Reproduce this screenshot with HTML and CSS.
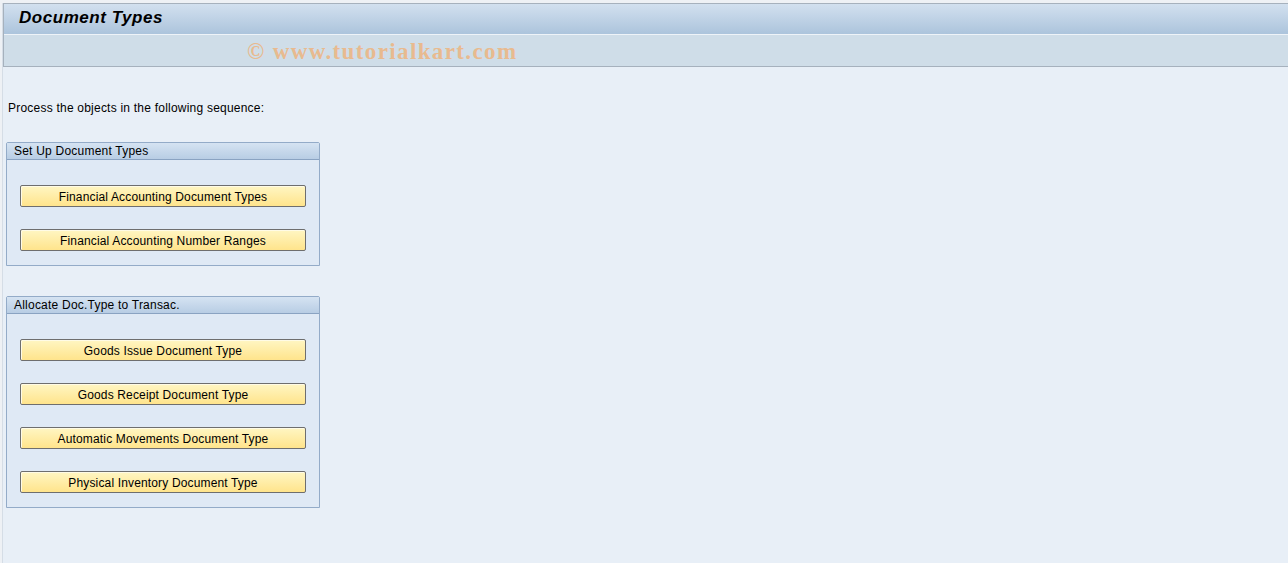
FILE: index.html
```html
<!DOCTYPE html>
<html>
<head>
<meta charset="utf-8">
<link rel="stylesheet" href="styles.css">
</head>
<body>
<div class="frame">
  <div class="header">
    <div class="titlebar"><span class="title">Document Types</span></div>
    <div class="toolbar"><span class="watermark">© www.tutorialkart.com</span></div>
  </div>
  <div class="content">
    <p class="intro">Process the objects in the following sequence:</p>
    <div class="group">
      <div class="group-head">Set Up Document Types</div>
      <div class="group-body">
        <button class="btn">Financial Accounting Document Types</button>
        <button class="btn">Financial Accounting Number Ranges</button>
      </div>
    </div>
    <div class="group">
      <div class="group-head">Allocate Doc.Type to Transac.</div>
      <div class="group-body">
        <button class="btn">Goods Issue Document Type</button>
        <button class="btn">Goods Receipt Document Type</button>
        <button class="btn">Automatic Movements Document Type</button>
        <button class="btn">Physical Inventory Document Type</button>
      </div>
    </div>
  </div>
</div>
</body>
</html>
```

FILE: styles.css
```css
html, body {
  margin: 0;
  padding: 0;
  background: #eef1f5;
  height: 563px;
  overflow: hidden;
}
.frame {
  margin: 3px 0 0 2px;
  height: 560px;
  background: #e8eff7;
  border-left: 1px solid #d5dde6;
  font-family: "Liberation Sans", sans-serif;
}
.header {
  border: 1px solid #a6b1bd;
  border-right: none;
}
.titlebar {
  height: 30px;
  background: linear-gradient(#d2e0ef, #acc4dc);
  display: flex;
  align-items: center;
  padding-left: 15px;
}
.title {
  font-family: "Liberation Sans", sans-serif;
  font-weight: bold;
  font-style: italic;
  font-size: 17px;
  letter-spacing: 0.55px;
  color: #000;
  margin-top: -2px;
}
.toolbar {
  height: 31px;
  border-top: 1px solid #eef3f8;
  background: #cfdde8;
  display: flex;
  align-items: center;
  padding-left: 243px;
}
.watermark {
  font-family: "Liberation Serif", serif;
  font-weight: bold;
  font-size: 23px;
  color: #e8ba8f;
  letter-spacing: 1.38px;
  margin-top: 3px;
}
.content {
  padding: 34px 0 0 3px;
  font-family: "Liberation Sans", sans-serif;
  font-size: 12px;
  letter-spacing: 0.22px;
  color: #000;
}
.intro {
  margin: 0 0 27px 2px;
  line-height: 14px;
}
.group {
  width: 312px;
  border: 1px solid #93abc8;
  border-radius: 2px 2px 0 0;
  background: #dfe9f5;
  margin-bottom: 30px;
}
.group-head {
  height: 16px;
  line-height: 17px;
  padding-left: 7px;
  background: linear-gradient(#d5e3f2, #b8cde4);
  border-bottom: 1px solid #8aa3c2;
}
.group-body {
  display: flex;
  flex-direction: column;
  gap: 22px;
  padding: 25px 0 14px 13px;
}
.btn {
  width: 286px;
  height: 22px;
  padding: 1px 0 0;
  border: 1px solid #6e6e6e;
  border-radius: 2px;
  background: linear-gradient(#fff6c3, #ffe48c);
  font-family: "Liberation Sans", sans-serif;
  font-size: 12px;
  letter-spacing: 0.15px;
  color: #000;
  box-shadow: inset 1px 1px 0 #fffbe6;
}
```
